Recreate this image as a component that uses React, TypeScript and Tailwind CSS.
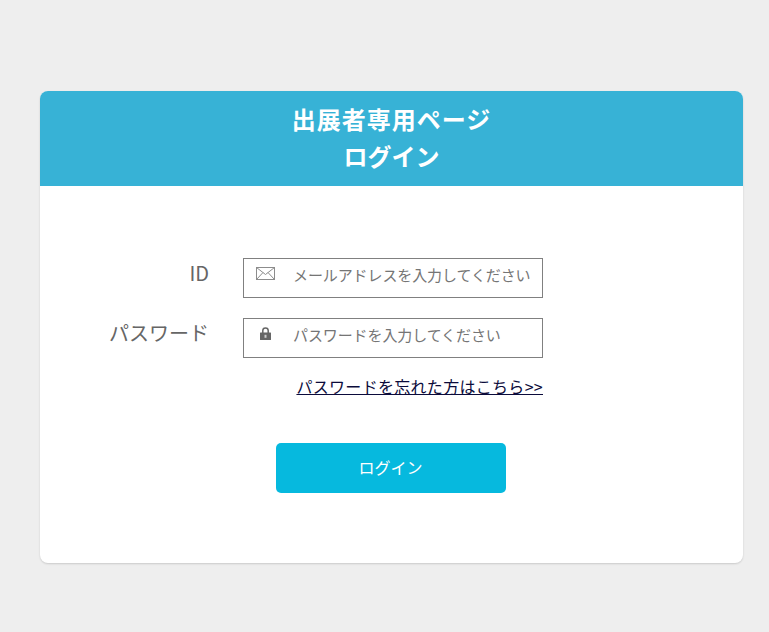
const jp = "font-['Noto_Sans_CJK_JP','Noto_Sans',sans-serif]";

function MailIcon() {
  return (
    <svg width="19" height="13" viewBox="0 0 19 13" fill="none" stroke="#8c8c8c" strokeWidth="1" className="block">
      <rect x="0.5" y="0.5" width="18" height="12" />
      <path d="M0.5 0.5 L9.5 7.5 L18.5 0.5" />
      <path d="M0.5 12.5 L7 5.5 M18.5 12.5 L12 5.5" />
    </svg>
  );
}

function LockIcon() {
  return (
    <svg width="11" height="13" viewBox="0 0 11 13" className="block">
      <path d="M2.8 6V3.6a2.7 2.7 0 0 1 5.4 0V6" fill="none" stroke="#666" strokeWidth="1.5" />
      <rect x="0" y="5.5" width="11" height="7.5" rx="0.5" fill="#666" />
      <rect x="4.5" y="7.8" width="2" height="3" fill="#ccc" />
    </svg>
  );
}

function Field({
  label,
  placeholder,
  type,
  icon,
}: {
  label: string;
  placeholder: string;
  type: string;
  icon: React.ReactNode;
}) {
  return (
    <div className="flex items-start">
      <label className="w-[169px] text-right text-[20px] leading-[30px] text-[#666]">
        {label}
      </label>
      <div className="relative ml-[34px] h-10 w-[300px] border border-[#808080] bg-white">
        <span className="absolute left-3 top-2">{icon}</span>
        <input
          type={type}
          placeholder={placeholder}
          className="h-[30px] w-full pl-[49px] text-[15px] tracking-[-0.1px] outline-none placeholder:text-[#757575]"
        />
      </div>
    </div>
  );
}

export default function App() {
  return (
    <main className={`min-h-[632px] bg-[#eeeeee] px-[40px] pt-[91px] ${jp}`}>
      <section className="h-[472px] w-[703px] overflow-hidden rounded-[8px] bg-white shadow-[0_1px_2px_rgba(0,0,0,0.15)]">
        <header className="h-[95px] bg-[#37b2d6] pt-[9px] text-center text-white">
          <h1 className="text-[24px] font-bold leading-[37px]">
            <span className="tracking-[1px]">出展者専用ページ</span>
            <br />
            ログイン
          </h1>
        </header>
        <form className="pt-[72px]">
          <div className="space-y-5">
            <Field label="ID" placeholder="メールアドレスを入力してください" type="email" icon={<MailIcon />} />
            <Field
              label="パスワード"
              placeholder="パスワードを入力してください"
              type="password"
              icon={<span className="ml-1 block"><LockIcon /></span>}
            />
          </div>
          <div className="mt-4 flex w-[503px] justify-end">
            <a href="#" className="text-[16px] leading-6 tracking-[0.3px] text-[#0b0b3b] underline">
              パスワードを忘れた方はこちら&gt;&gt;
            </a>
          </div>
          <div className="mt-[45px] flex w-[701px] justify-center">
            <button type="button" className="h-[50px] w-[230px] rounded-[5px] bg-[#06b9de] pb-[2px] text-[16px] text-white">
              ログイン
            </button>
          </div>
        </form>
      </section>
    </main>
  );
}
